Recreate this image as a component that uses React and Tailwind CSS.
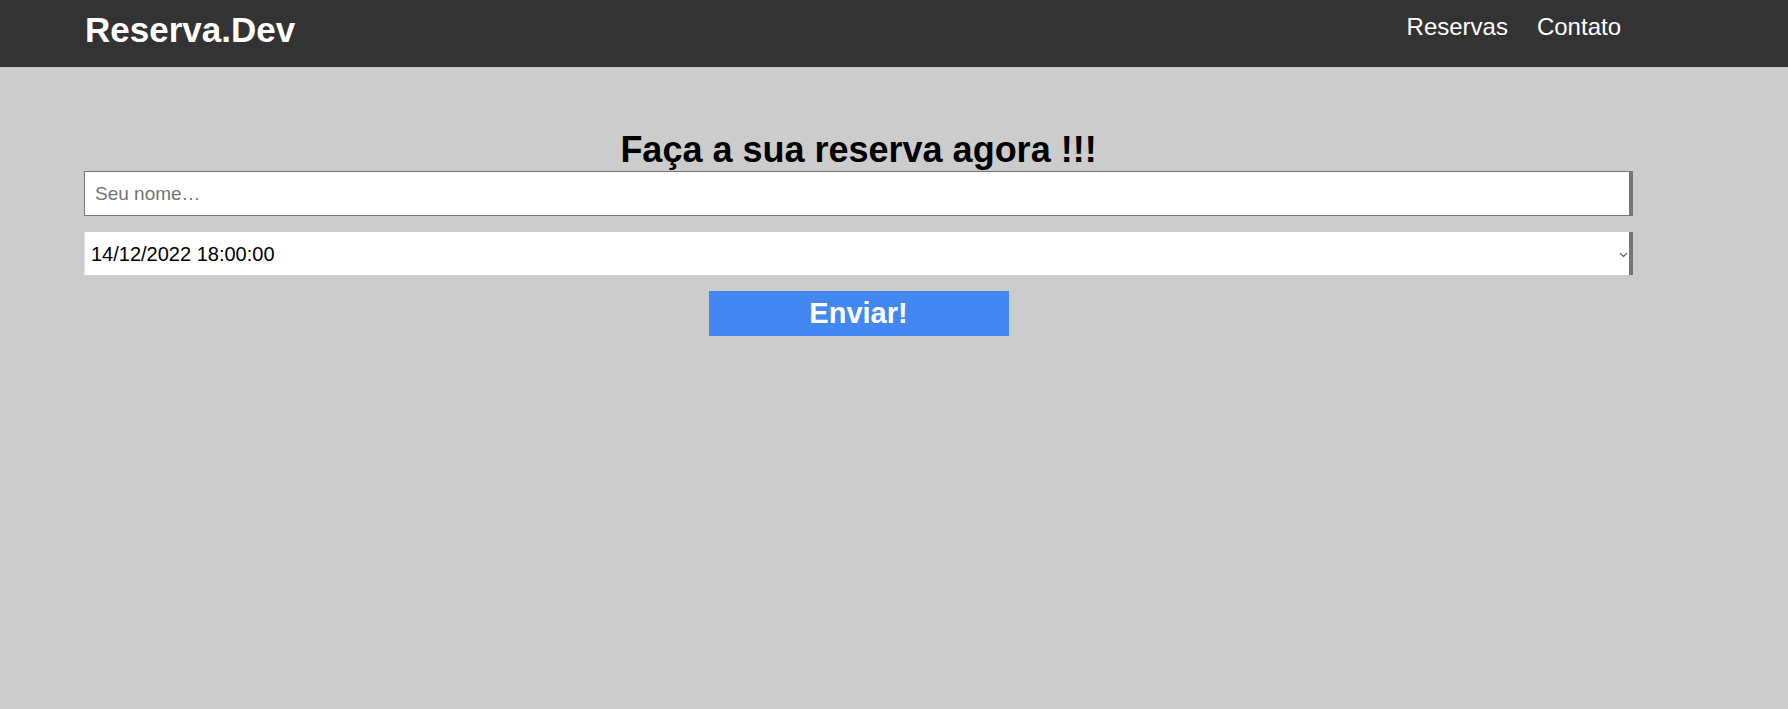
import { useState } from "react"

const font = { fontFamily: '"Liberation Sans", Arial, sans-serif' }

function Header() {
  return (
    <header className="h-[67px] bg-[#333333] flex justify-between items-start pl-[85px] pr-[167px]">
      <a href="#" className="mt-[9px] text-[35px] leading-[42px] font-bold text-white">
        Reserva.Dev
      </a>
      <nav className="mt-[13px] flex gap-[29px] text-[24px] leading-[27px] text-white">
        <a href="#">Reservas</a>
        <a href="#">Contato</a>
      </nav>
    </header>
  )
}

function ReservaForm() {
  const [nome, setNome] = useState("")
  const [horario, setHorario] = useState("14/12/2022 18:00:00")

  return (
    <form
      onSubmit={(e) => e.preventDefault()}
      className="flex flex-col"
    >
      <h1 className="text-center text-[36px] leading-[42px] font-bold text-black">
        Faça a sua reserva agora !!!
      </h1>
      <input
        value={nome}
        onChange={(e) => setNome(e.target.value)}
        placeholder="Seu nome…"
        className="h-[45px] w-full bg-white border border-[#767676] border-r-4 px-[10px] text-[19px] text-black placeholder:text-[#757575] outline-none"
      />
      <div className="relative mt-4">
        <select
          value={horario}
          onChange={(e) => setHorario(e.target.value)}
          className="appearance-none h-[43px] w-full bg-white border-l border-l-[#e4e4e4] border-r-4 border-r-[#767676] pl-[6px] text-[20px] text-black outline-none"
        >
          <option>14/12/2022 18:00:00</option>
          <option>14/12/2022 19:00:00</option>
          <option>14/12/2022 20:00:00</option>
        </select>
        <svg
          className="absolute right-[5px] top-[20px] pointer-events-none"
          width="9"
          height="6"
          viewBox="0 0 9 6"
          fill="none"
        >
          <path d="M1 1l3.5 3.5L8 1" stroke="#6f6f6f" strokeWidth="1.3" />
        </svg>
      </div>
      <button
        type="submit"
        className="mt-4 self-center w-[300px] h-[45px] bg-[#4287f2] text-white text-[29px] font-bold leading-none"
      >
        Enviar!
      </button>
    </form>
  )
}

export default function App() {
  return (
    <div style={font} className="min-h-[709px] bg-[#cccccc]">
      <Header />
      <main className="pt-[62px] pl-[84px] pr-[155px]">
        <ReservaForm />
      </main>
    </div>
  )
}
